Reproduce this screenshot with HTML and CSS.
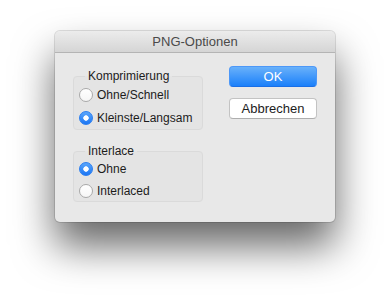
FILE: index.html
```html
<!DOCTYPE html>
<html lang="de">

<head>
  <meta charset="UTF-8">
  <meta name="viewport" content="width=device-width, initial-scale=1.0">
  <title>PNG-Optionen</title>
  <link rel="stylesheet" href="styles.css">
</head>

<body>
  <div class="dialog">
    <div class="titlebar">PNG-Optionen</div>

    <div class="dialog-body">
      <div class="options">
        <fieldset class="group">
          <legend>Komprimierung</legend>
          <label class="option"><input type="radio" name="compression"> Ohne/Schnell</label>
          <label class="option"><input type="radio" name="compression" checked> Kleinste/Langsam</label>
        </fieldset>

        <fieldset class="group group-compact">
          <legend>Interlace</legend>
          <label class="option"><input type="radio" name="interlace" checked> Ohne</label>
          <label class="option"><input type="radio" name="interlace"> Interlaced</label>
        </fieldset>
      </div>

      <div class="actions">
        <button class="btn btn-primary">OK</button>
        <button class="btn">Abbrechen</button>
      </div>
    </div>
  </div>
</body>

</html>
```

FILE: styles.css
```css
html,
body {
  min-height: 300px;
}

body {
  margin: 0;
  padding-top: 31px;
  box-sizing: border-box;
  background-color: #fff;
  font-family: 'Liberation Sans', Arial, sans-serif;
  color: #1c1c1c;
}

.dialog {
  width: 280px;
  margin-left: 55px;
  background-color: #e8e8e8;
  border-radius: 5px;
  box-shadow: 0 24px 40px rgba(0, 0, 0, 0.6), 0 0 0 1px rgba(0, 0, 0, 0.12);
  overflow: hidden;
}

.titlebar {
  height: 21px;
  line-height: 22px;
  text-align: center;
  font-size: 13px;
  color: #4a4a4a;
  background: linear-gradient(#ececec, #d5d5d5);
  border-bottom: 1px solid #b4b4b4;
}

.dialog-body {
  display: flex;
  gap: 26px;
  padding: 16px 18px 20px;
}

.options {
  display: flex;
  flex-direction: column;
  gap: 14px;
}

.group {
  width: 118px;
  margin: 0;
  padding: 4px 5px 3px;
  border: 1px solid #dadada;
  border-radius: 4px;
  background-color: #e4e4e4;
  display: flex;
  flex-direction: column;
  gap: 7px;
}

.group-compact {
  padding-top: 3px;
  padding-bottom: 2px;
  gap: 6px;
}

.group legend {
  margin-left: 6px;
  padding: 0 3px;
  font-size: 12px;
  line-height: 14px;
}

.option {
  display: flex;
  align-items: center;
  gap: 4px;
  height: 16px;
  font-size: 12px;
}

.option input {
  appearance: none;
  -webkit-appearance: none;
  width: 14px;
  height: 14px;
  margin: 0;
  border-radius: 50%;
  border: 1px solid #a9a9a9;
  background: linear-gradient(#fff, #f6f6f6);
}

.option input:checked {
  border-color: #2a7ef0;
  background: radial-gradient(circle, #fff 0 2.4px, transparent 3px), linear-gradient(#5aa6fb, #1c76f4);
}

.actions {
  display: flex;
  flex-direction: column;
  gap: 11px;
  margin-top: -3px;
}

.btn {
  width: 88px;
  height: 21px;
  padding: 0;
  font-family: inherit;
  font-size: 13px;
  color: #1c1c1c;
  background-color: #fff;
  border: 1px solid #c3c3c3;
  border-bottom-color: #aeaeae;
  border-radius: 4px;
}

.btn-primary {
  color: #fff;
  background: linear-gradient(#69b1fa, #1b80fa);
  border-color: #4d98f8;
  border-bottom-color: #1a6fe6;
}
```
